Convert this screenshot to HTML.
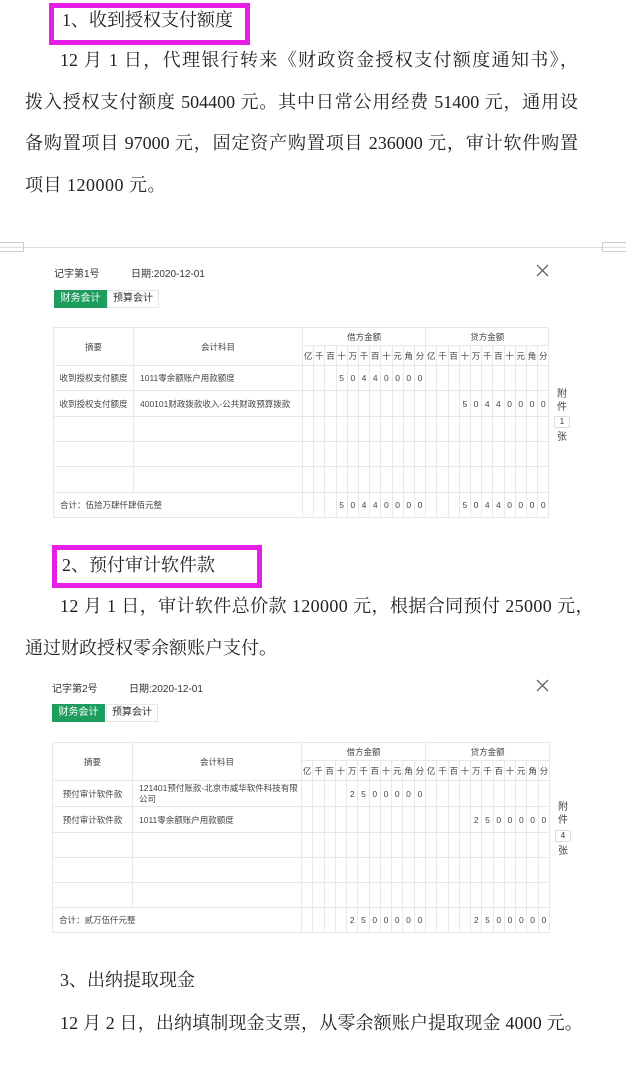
<!DOCTYPE html>
<html><head><meta charset="utf-8"><style>
body{margin:0;width:626px;height:1078px;background:#fff;position:relative;overflow:hidden;font-family:"Liberation Serif","Noto Serif CJK SC",serif;color:#222}
.t{position:absolute;font-size:18px;white-space:nowrap;line-height:20px}
.j{position:absolute;font-size:18px;line-height:20px;height:20px;overflow:hidden;text-align:justify;text-align-last:justify;text-justify:inter-character;white-space:normal}
.box{position:absolute;border:5px solid #e61ee6;box-sizing:border-box}
.s{font-family:"Liberation Sans","Noto Sans CJK SC",sans-serif;position:absolute;font-size:10px;color:#333;white-space:nowrap}
.tab1{position:absolute;background:#1e9e5e;color:#fff;font-family:"Liberation Sans","Noto Sans CJK SC",sans-serif;font-size:10px;width:53px;height:18px;line-height:18px;text-align:center}
.tab2{position:absolute;border:1px solid #e6e6e6;box-sizing:border-box;color:#333;font-family:"Liberation Sans","Noto Sans CJK SC",sans-serif;font-size:10px;width:52px;height:18px;line-height:16px;text-align:center}
table{position:absolute;border-collapse:collapse;table-layout:fixed;font-family:"Liberation Sans","Noto Sans CJK SC",sans-serif;font-size:8.5px;color:#444}
td{border:1px solid #e8e8e8;padding:0;text-align:center;overflow:hidden;white-space:nowrap}
col.b{border-left:1px solid #b8dcf4}
col.r{border-left:1px solid #f4c4c4}
td.l{text-align:left;padding-left:6px}
.x{position:absolute}
.att{position:absolute;font-family:"Liberation Sans","Noto Sans CJK SC",sans-serif;font-size:10px;color:#444;line-height:13px;text-align:center;width:14px}
.nb{position:absolute;width:14px;height:10px;border:1px solid #ddd;font-family:"Liberation Sans",sans-serif;font-size:8px;line-height:10px;text-align:center;color:#333}
</style></head><body>

<div class="box" style="left:49px;top:3px;width:201px;height:42px"></div>
<div class="t" style="left:62px;top:10px">1、收到授权支付额度</div>
<div class="j" style="left:60px;top:50px;width:518px">12 月 1 日，代理银行转来《财政资金授权支付额度通知书》，</div>
<div class="j" style="left:25px;top:92px;width:553px">拨入授权支付额度 504400 元。其中日常公用经费 51400 元，通用设</div>
<div class="j" style="left:25px;top:133px;width:553px">备购置项目 97000 元，固定资产购置项目 236000 元，审计软件购置</div>
<div class="t" style="left:25px;top:175px;letter-spacing:0.5px">项目 120000 元。</div>

<div style="position:absolute;left:0;top:247px;width:626px;height:1px;background:#ddd"></div>
<div style="position:absolute;left:0;top:242px;width:24px;height:10px;border:1px solid #ccc;border-left:none;box-sizing:border-box"></div>
<div style="position:absolute;left:602px;top:242px;width:24px;height:10px;border:1px solid #ccc;border-right:none;box-sizing:border-box"></div>

<div class="s" style="left:54px;top:265px">记字第1号</div>
<div class="s" style="left:131px;top:265px">日期:2020-12-01</div>
<svg class="x" style="left:536px;top:264px" width="13" height="13"><path d="M1 1L12 12M12 1L1 12" stroke="#666" stroke-width="1.3"/></svg>
<div class="tab1" style="left:54px;top:290px">财务会计</div>
<div class="tab2" style="left:107px;top:290px">预算会计</div>

<table style="left:53px;top:327px;width:495px">
<colgroup><col style="width:80px"><col style="width:169px"><col span="3" style="width:11.2px"><col class="b" span="3" style="width:11.2px"><col class="b" span="3" style="width:11.2px"><col class="r" span="2" style="width:11.2px"><col span="3" style="width:11.2px"><col class="b" span="3" style="width:11.2px"><col class="b" span="3" style="width:11.2px"><col class="r" span="2" style="width:11.2px"></colgroup>
<tr style="height:18px"><td rowspan="2">摘要</td><td rowspan="2">会计科目</td><td colspan="11">借方金额</td><td colspan="11">贷方金额</td></tr>
<tr style="height:20px"><td>亿</td><td>千</td><td>百</td><td>十</td><td>万</td><td>千</td><td>百</td><td>十</td><td>元</td><td>角</td><td>分</td><td>亿</td><td>千</td><td>百</td><td>十</td><td>万</td><td>千</td><td>百</td><td>十</td><td>元</td><td>角</td><td>分</td></tr>
<tr style="height:25px"><td>收到授权支付额度</td><td class="l">1011零余额账户用款额度</td><td></td><td></td><td></td><td>5</td><td>0</td><td>4</td><td>4</td><td>0</td><td>0</td><td>0</td><td>0</td><td></td><td></td><td></td><td></td><td></td><td></td><td></td><td></td><td></td><td></td><td></td></tr>
<tr style="height:26px"><td>收到授权支付额度</td><td class="l">400101财政拨款收入-公共财政预算拨款</td><td></td><td></td><td></td><td></td><td></td><td></td><td></td><td></td><td></td><td></td><td></td><td></td><td></td><td></td><td>5</td><td>0</td><td>4</td><td>4</td><td>0</td><td>0</td><td>0</td><td>0</td></tr>
<tr style="height:25px"><td></td><td></td><td></td><td></td><td></td><td></td><td></td><td></td><td></td><td></td><td></td><td></td><td></td><td></td><td></td><td></td><td></td><td></td><td></td><td></td><td></td><td></td><td></td><td></td></tr>
<tr style="height:25px"><td></td><td></td><td></td><td></td><td></td><td></td><td></td><td></td><td></td><td></td><td></td><td></td><td></td><td></td><td></td><td></td><td></td><td></td><td></td><td></td><td></td><td></td><td></td><td></td></tr>
<tr style="height:26px"><td></td><td></td><td></td><td></td><td></td><td></td><td></td><td></td><td></td><td></td><td></td><td></td><td></td><td></td><td></td><td></td><td></td><td></td><td></td><td></td><td></td><td></td><td></td><td></td></tr>
<tr style="height:25px"><td colspan="2" class="l">合计：伍拾万肆仟肆佰元整</td><td></td><td></td><td></td><td>5</td><td>0</td><td>4</td><td>4</td><td>0</td><td>0</td><td>0</td><td>0</td><td></td><td></td><td></td><td>5</td><td>0</td><td>4</td><td>4</td><td>0</td><td>0</td><td>0</td><td>0</td></tr>
</table>
<div class="att" style="left:555px;top:388px">附<br>件</div>
<div class="nb" style="left:554px;top:416px">1</div>
<div class="att" style="left:555px;top:431px">张</div>

<div class="box" style="left:52px;top:545px;width:210px;height:43px"></div>
<div class="t" style="left:62px;top:555px">2、预付审计软件款</div>
<div class="t" style="left:60px;top:596px;letter-spacing:0.4px">12 月 1 日，审计软件总价款 120000 元，根据合同预付 25000 元，</div>
<div class="t" style="left:25px;top:638px">通过财政授权零余额账户支付。</div>

<div class="s" style="left:52px;top:680px">记字第2号</div>
<div class="s" style="left:129px;top:680px">日期:2020-12-01</div>
<svg class="x" style="left:536px;top:679px" width="13" height="13"><path d="M1 1L12 12M12 1L1 12" stroke="#666" stroke-width="1.3"/></svg>
<div class="tab1" style="left:52px;top:704px">财务会计</div>
<div class="tab2" style="left:106px;top:704px">预算会计</div>

<table style="left:52px;top:742px;width:497px">
<colgroup><col style="width:80px"><col style="width:169px"><col span="3" style="width:11.27px"><col class="b" span="3" style="width:11.27px"><col class="b" span="3" style="width:11.27px"><col class="r" span="2" style="width:11.27px"><col span="3" style="width:11.27px"><col class="b" span="3" style="width:11.27px"><col class="b" span="3" style="width:11.27px"><col class="r" span="2" style="width:11.27px"></colgroup>
<tr style="height:18px"><td rowspan="2">摘要</td><td rowspan="2">会计科目</td><td colspan="11">借方金额</td><td colspan="11">贷方金额</td></tr>
<tr style="height:20px"><td>亿</td><td>千</td><td>百</td><td>十</td><td>万</td><td>千</td><td>百</td><td>十</td><td>元</td><td>角</td><td>分</td><td>亿</td><td>千</td><td>百</td><td>十</td><td>万</td><td>千</td><td>百</td><td>十</td><td>元</td><td>角</td><td>分</td></tr>
<tr style="height:26px"><td>预付审计软件款</td><td class="l" style="white-space:normal;line-height:11px">121401预付账款-北京市威华软件科技有限公司</td><td></td><td></td><td></td><td></td><td>2</td><td>5</td><td>0</td><td>0</td><td>0</td><td>0</td><td>0</td><td></td><td></td><td></td><td></td><td></td><td></td><td></td><td></td><td></td><td></td><td></td></tr>
<tr style="height:26px"><td>预付审计软件款</td><td class="l">1011零余额账户用款额度</td><td></td><td></td><td></td><td></td><td></td><td></td><td></td><td></td><td></td><td></td><td></td><td></td><td></td><td></td><td></td><td>2</td><td>5</td><td>0</td><td>0</td><td>0</td><td>0</td><td>0</td></tr>
<tr style="height:25px"><td></td><td></td><td></td><td></td><td></td><td></td><td></td><td></td><td></td><td></td><td></td><td></td><td></td><td></td><td></td><td></td><td></td><td></td><td></td><td></td><td></td><td></td><td></td><td></td></tr>
<tr style="height:25px"><td></td><td></td><td></td><td></td><td></td><td></td><td></td><td></td><td></td><td></td><td></td><td></td><td></td><td></td><td></td><td></td><td></td><td></td><td></td><td></td><td></td><td></td><td></td><td></td></tr>
<tr style="height:25px"><td></td><td></td><td></td><td></td><td></td><td></td><td></td><td></td><td></td><td></td><td></td><td></td><td></td><td></td><td></td><td></td><td></td><td></td><td></td><td></td><td></td><td></td><td></td><td></td></tr>
<tr style="height:25px"><td colspan="2" class="l">合计：贰万伍仟元整</td><td></td><td></td><td></td><td></td><td>2</td><td>5</td><td>0</td><td>0</td><td>0</td><td>0</td><td>0</td><td></td><td></td><td></td><td></td><td>2</td><td>5</td><td>0</td><td>0</td><td>0</td><td>0</td><td>0</td></tr>
</table>
<div class="att" style="left:556px;top:801px">附<br>件</div>
<div class="nb" style="left:555px;top:830px">4</div>
<div class="att" style="left:556px;top:845px">张</div>

<div class="t" style="left:60px;top:970px">3、出纳提取现金</div>
<div class="t" style="left:60px;top:1013px;letter-spacing:0.15px">12 月 2 日，出纳填制现金支票，从零余额账户提取现金 4000 元。</div>
</body></html>
